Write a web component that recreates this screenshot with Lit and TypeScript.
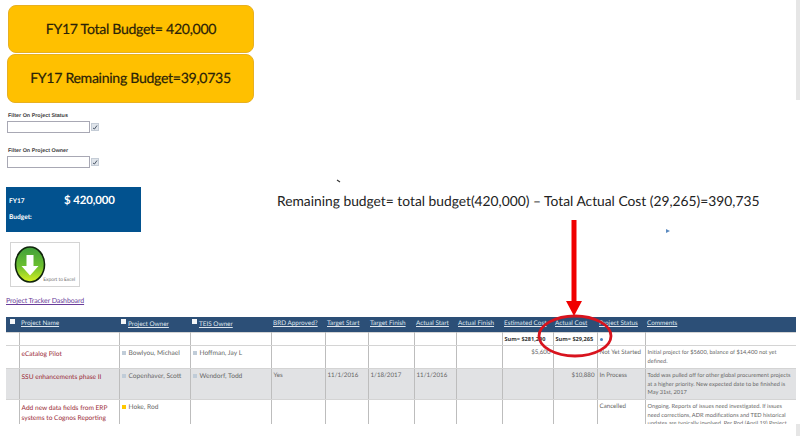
import { LitElement, html, css } from "lit";
import { customElement } from "lit/decorators.js";

@customElement("app-root")
export class AppRoot extends LitElement {
  static styles = css`
    :host { display: block; width: 800px; height: 436px; position: relative; overflow: hidden; background: #fff; font-family: Lato, sans-serif; color: #444; text-rendering: geometricPrecision; }
    .top { display: flex; }
    .left { width: 270px; flex: none; padding: 5px 0 0 7px; box-sizing: border-box; display: flex; flex-direction: column; }
    .left > * { flex: none; }
    .pill { background: #ffc000; border: 1px solid #e8b020; box-sizing: border-box; border-radius: 8px; display: flex; align-items: center; justify-content: center; font-size: 14.1px; letter-spacing: -0.3px; color: #2a2208; -webkit-text-stroke: 0.2px #2a2208; }
    .p1 { width: 246px; height: 48px; margin-left: 1px; }
    .p2 { width: 247px; height: 49px; margin-top: 1px; }
    .flabel { font-family: "Liberation Sans", sans-serif; font-size: 5.4px; font-weight: bold; color: #444; line-height: 8px; margin-top: 9px; margin-left: 1px; }
    .f2 { margin-top: 14px; }
    .frow { display: flex; align-items: center; gap: 1px; height: 13px; }
    .input { width: 83px; height: 12px; box-sizing: border-box; border: 1px solid #a8a8b4; background: #fff; }
    .cal { display: block; flex: none; }
    .bluebox { margin: 19px 0 0 -1px; width: 135px; height: 45px; background: #02528f; color: #fff; display: grid; grid-template-columns: 55px 1fr; align-content: start; font-weight: bold; box-sizing: border-box; padding: 6px 0 0 3px; }
    .bl { font-size: 6.6px; line-height: 16px; }
    .bv { font-size: 11.4px; line-height: 15px; letter-spacing: -0.1px; }
    .export { margin: 10px 0 0 3px; width: 70px; height: 45px; box-sizing: border-box; border: 1px solid #d4d4d4; position: relative; display: flex; align-items: flex-end; justify-content: flex-end; padding: 0 4px 3px 0; font-size: 5px; letter-spacing: -0.1px; color: #777; }
    .export svg { position: absolute; left: 3px; top: 3px; }
    .link { margin-top: 10px; margin-left: -1px; height: 9px; line-height: 9px; font-size: 7px; letter-spacing: -0.1px; color: #6a3d9a; text-decoration: underline; }
    .right { flex: 1; padding: 192px 0 0 7px; font-size: 13.8px; color: #222; white-space: nowrap; }
    .wrap { margin: 11px 0 0 6px; width: 790px; height: 107px; overflow: hidden; }
    table { border-collapse: collapse; table-layout: fixed; width: 790px; font-size: 6.2px; line-height: 8.7px; }
    th { background: #2c4f77; color: #dfe6ee; font-weight: normal; height: 15px; text-align: left; padding: 0 0 0 2px; font-size: 6.4px; white-space: nowrap; overflow: hidden; border: 0; }
    th span { text-decoration: underline; }
    th i { display: inline-block; width: 5px; height: 5px; background: #f4f6f8; margin-right: 2px; vertical-align: 2px; }
    td { border: 1px solid #bdbdbd; border-top-color: #d4d4d4; border-bottom-color: #d4d4d4; vertical-align: top; padding: 3px 2px 0; overflow: hidden; color: #666; box-sizing: border-box; }
    td:first-child { border-left: 0; }
    td.r { text-align: right; }
    td.c { font-size: 5.7px; white-space: nowrap; }
    .sum td { height: 13px; padding: 2px 2px 0; font-family: "Open Sans", sans-serif; font-weight: bold; font-size: 5.6px; color: #333; white-space: nowrap; }
    .r1 td { height: 23px; }
    .r2 td { height: 31px; background: #e1e2e4; }
    .r3 td { height: 40px; }
    td.name { color: #9a2a36; font-size: 6.6px; line-height: 10px; }
    td.own { font-size: 6.6px; color: #666; white-space: nowrap; }
    .own b { display: inline-block; width: 4px; height: 4px; background: #c0ccd8; margin-right: 3px; }
    .own b.y { background: #ffc800; }
    .dot { display: inline-block; width: 3px; height: 3px; border-radius: 50%; background: #4a7fb8; margin-top: 2px; }
    .scroll { position: absolute; right: 0; top: 0; width: 4px; height: 100px; background: #e6e6e6; }
    .corner { position: absolute; right: 0; bottom: 0; width: 4px; height: 12px; background: #e6e6e6; }
    .overlay { position: absolute; left: 0; top: 0; pointer-events: none; }
    .tri { position: absolute; left: 666px; top: 229px; width: 0; height: 0; border-left: 4px solid #5b8ac0; border-top: 2.5px solid transparent; border-bottom: 2.5px solid transparent; }
  `;

  private cal() {
    return html`<svg class="cal" width="8" height="8" viewBox="0 0 8 8">
      <rect x="0.5" y="0.5" width="7" height="7" fill="#dfe4ea" stroke="#c4ccd6"/>
      <path d="M2 5l1.5 1L6 2.5" fill="none" stroke="#4a5666" stroke-width="1"/>
    </svg>`;
  }

  render() {
    const heads = ["Project Name", "Project Owner", "TEIS Owner", "BRD Approved?", "Target Start", "Target Finish", "Actual Start", "Actual Finish", "Estimated Cost", "Actual Cost", "Project Status", "Comments"];
    const widths = [13, 100, 71, 81, 54, 43, 46, 42, 46, 51, 44, 48, 151];
    return html`
      <div class="top">
        <div class="left">
          <div class="pill p1">FY17 Total Budget= 420,000</div>
          <div class="pill p2">FY17 Remaining Budget=39,0735</div>
          <div class="flabel">Filter On Project Status</div>
          <div class="frow"><div class="input"></div>${this.cal()}</div>
          <div class="flabel f2">Filter On Project Owner</div>
          <div class="frow"><div class="input"></div>${this.cal()}</div>
          <div class="bluebox">
            <div class="bl">FY17</div><div class="bv">$ 420,000</div>
            <div class="bl">Budget:</div>
          </div>
          <div class="export">
            <svg width="32" height="38" viewBox="0 0 32 38">
              <defs><linearGradient id="g" x1="0" y1="0" x2="0" y2="1"><stop offset="0" stop-color="#3f9e3a"/><stop offset="0.55" stop-color="#6cc030"/><stop offset="1" stop-color="#d8f020"/></linearGradient></defs>
              <ellipse cx="16" cy="18.5" rx="14.5" ry="17.5" fill="url(#g)" stroke="#10240c" stroke-width="1.6"/>
              <path d="M12.5 9h7v11h5L16 29.5 7.5 20h5z" fill="#fff"/>
            </svg>
            Export to Excel
          </div>
          <div class="link">Project Tracker Dashboard</div>
        </div>
        <div class="right">Remaining budget= total budget(420,000) – Total Actual Cost (29,265)=390,735</div>
      </div>
      <div class="wrap">
        <table>
          <colgroup>${widths.map((w) => html`<col style="width:${w}px" />`)}</colgroup>
          <thead>
            <tr>
              <th style="padding-left:4px"><i></i></th>
              ${heads.map((h, i) => html`<th>${i === 1 || i === 2 ? html`<i></i>` : ""}<span>${h}</span></th>`)}
            </tr>
          </thead>
          <tbody>
            <tr class="sum"><td></td><td></td><td></td><td></td><td></td><td></td><td></td><td></td><td></td><td>Sum= $281,290</td><td>Sum= $29,265</td><td><span class="dot"></span></td><td></td></tr>
            <tr class="r1"><td></td><td class="name">eCatalog Pilot</td><td class="own"><b></b>Bowlyou, Michael</td><td class="own"><b></b>Hoffman, Jay L</td><td></td><td></td><td></td><td></td><td></td><td class="r">$5,600</td><td></td><td>Not Yet Started</td><td class="c">Initial project for $5600, balance of $14,400 not yet<br />defined.</td></tr>
            <tr class="r2"><td></td><td class="name">SSU enhancements phase II</td><td class="own"><b></b>Copenhaver, Scott</td><td class="own"><b></b>Wendorf, Todd</td><td>Yes</td><td>11/1/2016</td><td>1/18/2017</td><td>11/1/2016</td><td></td><td></td><td class="r">$10,880</td><td>In Process</td><td class="c">Todd was pulled off for other global procurement projects<br />at a higher priority.  New expected date to be finished is<br />May 31st, 2017</td></tr>
            <tr class="r3"><td></td><td class="name">Add new data fields from ERP systems to Cognos Reporting</td><td class="own"><b class="y"></b>Hoke, Rod</td><td></td><td></td><td></td><td></td><td></td><td></td><td></td><td></td><td>Cancelled</td><td class="c">Ongoing. Reports of issues need investigated. If issues<br />need corrections, ADR modifications and TED historical<br />updates are typically involved. Per Rod (April 19) Project</td></tr>
          </tbody>
        </table>
      </div>
      <span class="tri"></span>
      <div class="scroll"></div>
      <div class="corner"></div>
      <svg class="overlay" width="800" height="436" viewBox="0 0 800 436">
        <path d="M337 180l3 2" stroke="#333" stroke-width="1.2"/>
        <path d="M574 220V304" stroke="#f00000" stroke-width="5"/>
        <path d="M566 301h16l-8 15z" fill="#f00000"/>
        <ellipse cx="575" cy="336" rx="36" ry="20" fill="none" stroke="#d8141e" stroke-width="2.8"/>
      </svg>
    `;
  }
}
